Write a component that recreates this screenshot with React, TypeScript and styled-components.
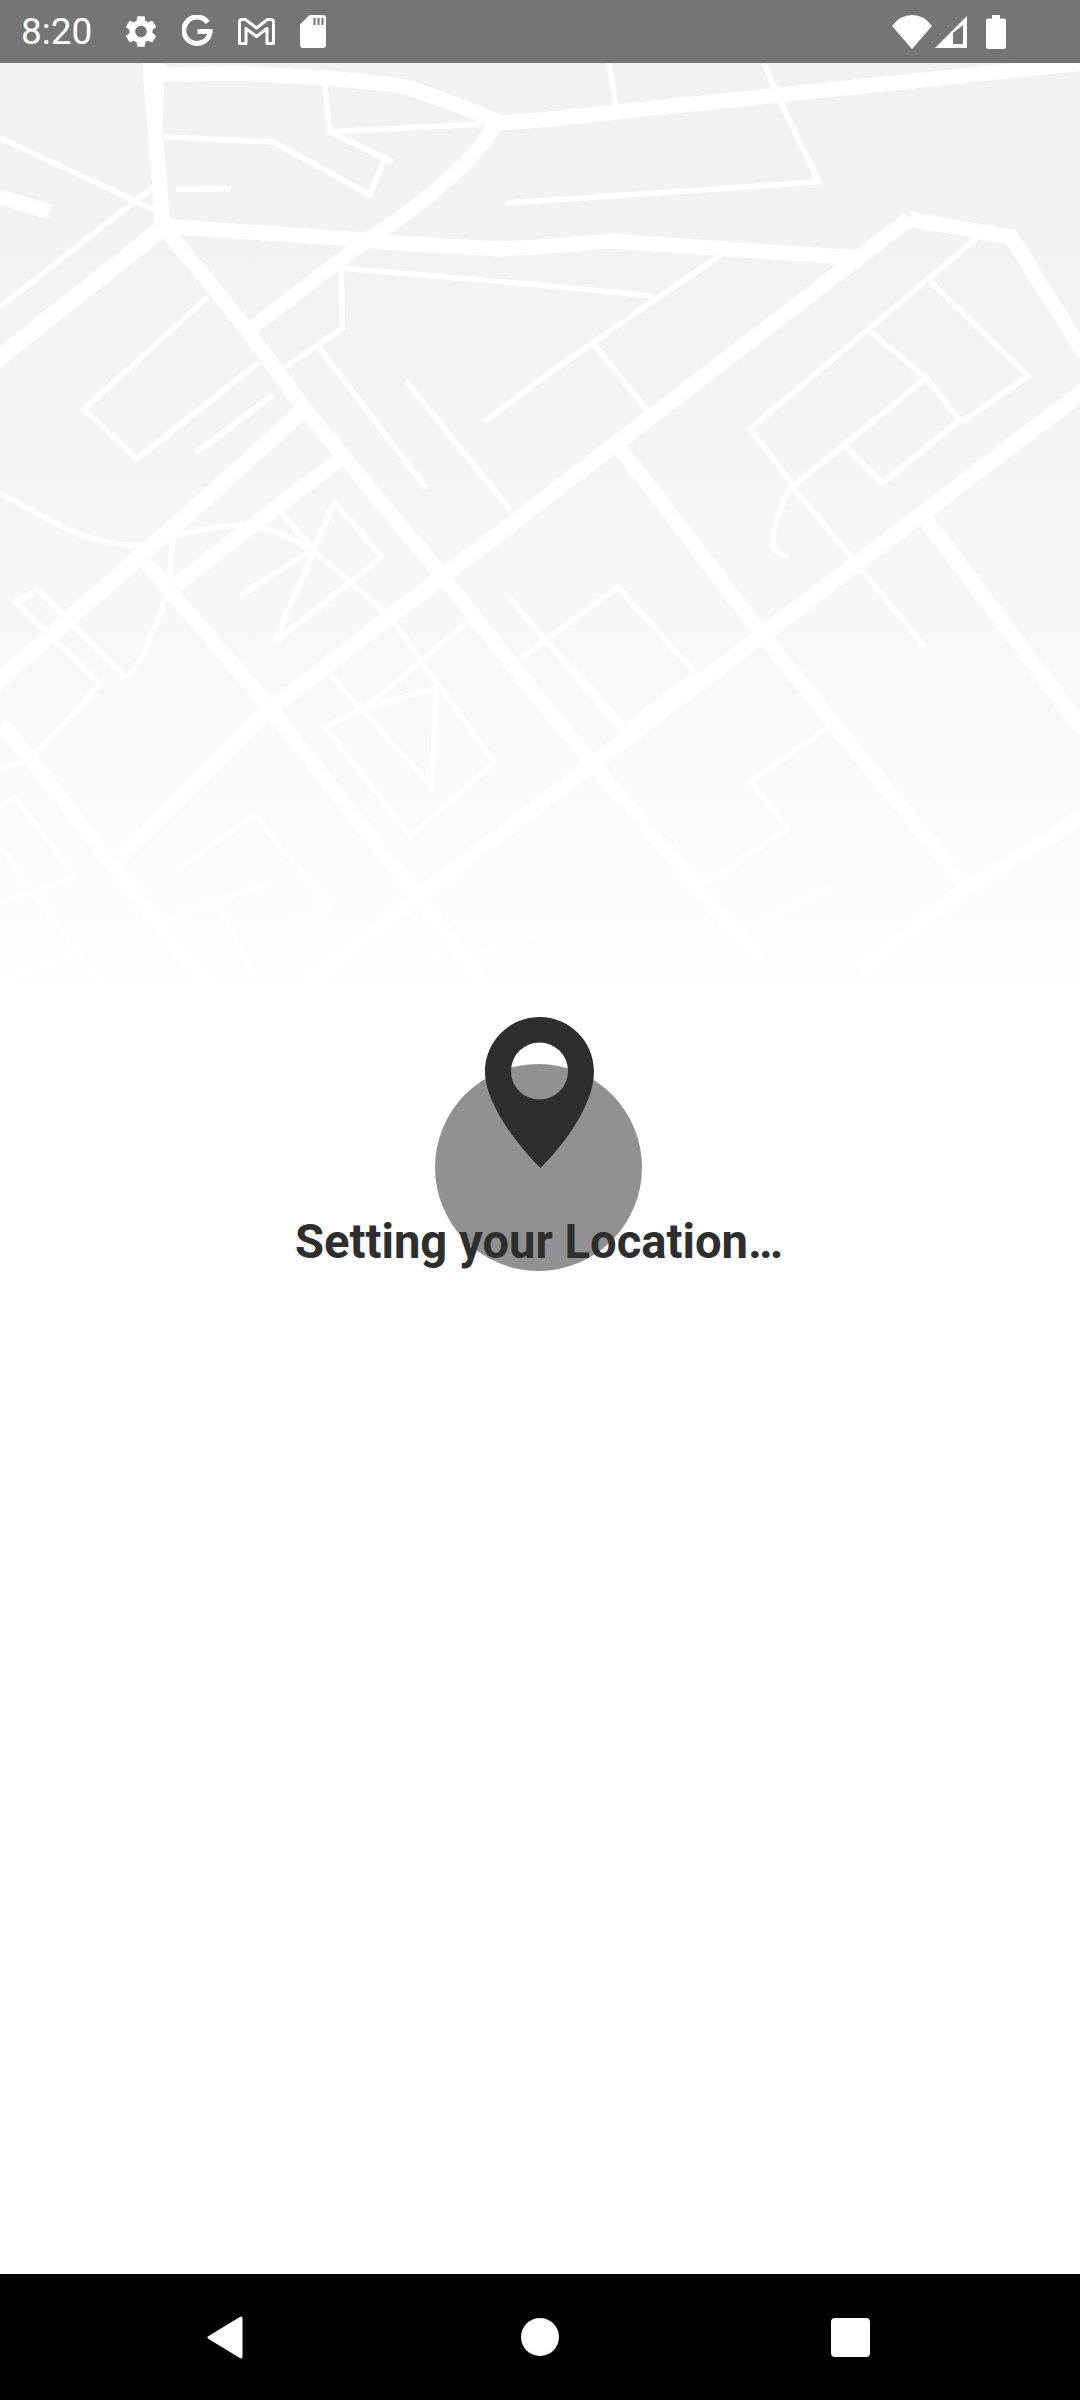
import React from "react";
import styled, { createGlobalStyle } from "styled-components";

const Global = createGlobalStyle`
  html, body { margin: 0; padding: 0; background: #fff; }
  #root { width: 1080px; height: 2400px; }
`;

const Screen = styled.div`
  width: 1080px;
  height: 2400px;
  display: flex;
  flex-direction: column;
  background: #fff;
  overflow: hidden;
  font-family: Roboto, "Liberation Sans", sans-serif;
`;

const StatusBar = styled.header`
  flex: none;
  height: 63px;
  background: #757575;
  color: #fff;
  display: flex;
  align-items: center;
  justify-content: space-between;
  padding: 0 74px 0 21px;
  box-sizing: border-box;
`;

const StatusGroup = styled.div<{ $gap: number }>`
  display: flex;
  align-items: center;
  gap: ${(p) => p.$gap}px;
`;

const Time = styled.span`
  font-size: 37px;
  line-height: 63px;
  font-weight: 400;
  margin-right: 8px;
`;

const StatusIcon = styled.svg`
  display: block;
  flex: none;
  fill: #fff;
`;

const BatteryIcon = styled(StatusIcon)`
  margin-left: 16px;
`;

const MapArea = styled.section`
  flex: none;
  height: 937px;
  background: linear-gradient(
    180deg,
    #f2f2f2 0%,
    #f3f3f3 30%,
    #f6f6f6 50%,
    #f9f9f9 70%,
    #fbfbfb 85%,
    #ffffff 100%
  );
`;

const MapDrawing = styled.svg`
  display: block;
  width: 1080px;
  height: 937px;
  fill: none;
  stroke: #fff;
`;

const Content = styled.main`
  flex: 1;
  display: flex;
  flex-direction: column;
  align-items: center;
  padding: 17px 2px 0 0;
`;

const Stage = styled.div`
  position: relative;
  display: flex;
  flex-direction: column;
  align-items: center;
`;

const Halo = styled.div`
  position: absolute;
  top: 47px;
  left: 50%;
  width: 207px;
  height: 207px;
  margin-left: -104px;
  border-radius: 50%;
  background: #919191;
`;

const Pin = styled.svg`
  position: relative;
  display: block;
  width: 109px;
  height: 151px;
  margin-left: 1px;
  fill: #2e2e2e;
`;

const Title = styled.h1`
  position: relative;
  margin: 48px 0 0;
  font-size: 47.2px;
  line-height: 52px;
  font-weight: 700;
  color: #2e2e2e;
  white-space: nowrap;
`;

const NavBar = styled.nav`
  flex: none;
  height: 126px;
  background: #000;
  display: grid;
  grid-template-columns: 1fr;
  align-items: center;
`;

const NavIcons = styled.div`
  display: flex;
  align-items: center;
  justify-content: space-between;
  padding: 0 210px 0 207px;
`;

const BackIcon = styled.svg`
  display: block;
  width: 37px;
  height: 43px;
  fill: #fff;
`;

const HomeIcon = styled.span`
  display: block;
  width: 38px;
  height: 38px;
  margin-left: 5px;
  border-radius: 50%;
  background: #fff;
`;

const RecentIcon = styled.span`
  display: block;
  width: 39px;
  height: 39px;
  border-radius: 4px;
  background: #fff;
`;

const majorRoads: [string, number][] = [
  ["M148 75 L241 73.3 L327 78 L396 85 Q412 88 424 93 L465 108 Q485 115 499 123 L540 120 L1085 63", 15],
  ["M497 122 L493 128 Q478 152 456 172 Q425 202 376 234 L356 248 L253 327", 14.5],
  ["M162 226 L365 240 L379 242 L499 249 L540 247 L612 241 L860 258", 15],
  ["M909 219 L1011 237 L1085 355", 15],
  ["M909 219 L540 502 L275 705 L265 713 L120 858", 15.5],
  ["M162 226 Q200 270 251 335 L303 407 L379 500 L444 578 L540 700 L592 763 L760 960", 15],
  ["M-5 361 L160 230", 17],
  ["M-5 684 L204 500 L301 412", 16],
  ["M339 460 L279 505 L176 585", 15],
  ["M146 563 L266 703 L275 715 L413 891 L458 950 L482 982", 15],
  ["M1085 390 L927 510 L598 760 L423 893 L310 980", 16],
  ["M619 448 L660 500 L760 632 L967 888", 15],
  ["M922 515 L1085 732", 15.5],
  ["M1085 815 L967 888 L860 970", 15],
  ["M0 723 L30 758 L138 898 L213 993", 15],
  ["M30 760 L157 920 L220 1000", 14],
  ["M0 197 L50 212", 15],
];

const thinRoads: string[] = [
  "M0 138 L155 210",
  "M0 307 L153 187",
  "M165 137 L274 142 L370 195 L384 160",
  "M325 85 L329.5 132 L392.5 162",
  "M329.5 132 L482 124",
  "M176 189 L231 188.7",
  "M506 203 L540 200.7 L819 182 L781 103 L764 63",
  "M609 63 L616 105",
  "M208 297 L84 409 L137 459 L259 362",
  "M273 395 L196 453",
  "M285 367 L342.6 328 L341 268 L540 285 L653.6 296",
  "M318.5 347 L426 488",
  "M406 381 L510 510",
  "M484 422 L540 380 L592 343 L721 255",
  "M593 343 L647 410",
  "M977 238 L750 429 L795 487",
  "M795 485 L926 378 L871 332",
  "M926 378 L960 420 L883 483 L846 447",
  "M931 282 L1028 376 L962 422",
  "M793 488 L812 510 L926 648",
  "M791 487 L784 500 Q764 545 780 553 Q786 557 789 555",
  "M0 493 C50 520 90 548 145 545",
  "M170 537 Q205 527 241 525 Q280 528 310 550 Q330 563 348 580 L386 613",
  "M172 540 L170 577",
  "M165 598 Q150 650 127 678",
  "M39 590 L127 678",
  "M39 590 L15.5 602 L100 685 L34 755",
  "M241 595 L312 550",
  "M334 502 L275 642 L382 557 L334 502",
  "M279 510 L312 548",
  "M394 623 L494 762 L411 837 L325 727 L365 708 L436 688 L432 787 L330 675",
  "M365 708 L467 622",
  "M510 598 L622 732",
  "M520 659 L618 587 L695 673 L625 727 L547 640",
  "M829 727 L750 782 L788 828 L702 885",
  "M826 888 L738 933",
  "M0 807 L15 798 L76 877 L0 903",
  "M0 847 L31 890 L79 953 L110 997",
  "M0 768 L22 762",
  "M181 867 L255 815 L330 907 L241 940",
  "M270 882 L165 920 L76 953 L0 980",
  "M219 905 L255 977",
  "M365 960 L441 957",
  "M468 953 L540 937",
];

export default function App() {
  return (
    <Screen>
      <Global />
      <StatusBar>
        <StatusGroup $gap={25}>
          <Time>8:20</Time>
          <StatusIcon width="32" height="33" viewBox="2 1.8 20 20.4">
            <path d="M19.14 12.94c.04-.3.06-.61.06-.94 0-.32-.02-.64-.07-.94l2.03-1.58a.49.49 0 0 0 .12-.61l-1.92-3.32a.49.49 0 0 0-.59-.22l-2.39.96c-.5-.38-1.03-.7-1.62-.94l-.36-2.54a.48.48 0 0 0-.48-.41h-3.84c-.24 0-.43.17-.47.41l-.36 2.54c-.59.24-1.13.57-1.62.94l-2.39-.96a.48.48 0 0 0-.59.22L2.74 8.87c-.12.21-.08.47.12.61l2.03 1.58c-.05.3-.09.63-.09.94s.02.64.07.94l-2.03 1.58a.49.49 0 0 0-.12.61l1.92 3.32c.12.22.37.29.59.22l2.39-.96c.5.38 1.03.7 1.62.94l.36 2.54c.05.24.24.41.48.41h3.84c.24 0 .44-.17.47-.41l.36-2.54c.59-.24 1.13-.56 1.62-.94l2.39.96c.22.08.47 0 .59-.22l1.92-3.32c.12-.22.07-.47-.12-.61l-2.01-1.58zM12 15.6c-1.98 0-3.6-1.62-3.6-3.6s1.62-3.6 3.6-3.6 3.6 1.62 3.6 3.6-1.62 3.6-3.6 3.6z" />
          </StatusIcon>
          <StatusIcon width="31" height="33" viewBox="0 0 32 33">
            <path
              d="M26.5 7.2 A13.6 13.6 0 1 0 29 17 L29 16.5 L16 16.5"
              fill="none"
              stroke="#fff"
              strokeWidth="5.2"
            />
          </StatusIcon>
          <StatusIcon width="37" height="27" viewBox="0 0 37 27">
            <path
              d="M1.5 25.5 V4 Q1.5 1.5 4 1.5 H7.5 L18.5 10 L29.5 1.5 H33 Q35.5 1.5 35.5 4 V25.5 H29 V10.5 L18.5 18.5 L8 10.5 V25.5 Z"
              fill="none"
              stroke="#fff"
              strokeWidth="3"
              strokeLinejoin="round"
            />
          </StatusIcon>
          <StatusIcon width="26" height="33" viewBox="0 0 26 33">
            <path d="M9.5 0 H23 a3 3 0 0 1 3 3 V30 a3 3 0 0 1 -3 3 H3 a3 3 0 0 1 -3 -3 V9.5 Z" />
            <path d="M13.5 3 h2 v7 h-2 z M17.5 3 h2 v7 h-2 z M21.5 3 h2 v7 h-2 z" fill="#757575" />
          </StatusIcon>
        </StatusGroup>
        <StatusGroup $gap={3}>
          <StatusIcon width="40" height="34" viewBox="0 0 40 34">
            <path d="M0 11 Q8 0 20 0 Q32 0 40 11 L20 34 Z" />
          </StatusIcon>
          <StatusIcon width="32" height="32" viewBox="0 0 32 32">
            <path fillRule="evenodd" d="M32 0 V32 H0 Z M18 17 V28 H28 V9 Z" />
          </StatusIcon>
          <BatteryIcon width="20" height="34" viewBox="0 0 20 34">
            <path d="M6 0 H14 V3.5 H18 a2 2 0 0 1 2 2 V32 a2 2 0 0 1 -2 2 H2 a2 2 0 0 1 -2 -2 V5.5 a2 2 0 0 1 2 -2 H6 Z" />
          </BatteryIcon>
        </StatusGroup>
      </StatusBar>

      <MapArea>
        <MapDrawing viewBox="0 63 1080 937">
          <polygon points="143,63 165,63 162.5,127 170,219 172,235 155,235 152,183 143,75" fill="#fff" stroke="none" />
          {majorRoads.map(([d, w], i) => (
            <path key={i} d={d} strokeWidth={w} />
          ))}
          {thinRoads.map((d, i) => (
            <path key={i} d={d} strokeWidth={5.5} />
          ))}
        </MapDrawing>
      </MapArea>

      <Content>
        <Stage>
          <Halo />
          <Pin viewBox="0 0 109 151">
            <path
              fillRule="evenodd"
              d="M54.5 0 C24.4 0 0 24.4 0 54.5 C0 90 40 136 55.5 151 C71 136 109 92 109 54.5 C109 24.4 84.6 0 54.5 0 Z M54.5 25.5 A28.5 28.5 0 1 1 54.5 82.5 A28.5 28.5 0 1 1 54.5 25.5 Z"
            />
          </Pin>
          <Title>Setting your Location…</Title>
        </Stage>
      </Content>

      <NavBar>
        <NavIcons>
          <BackIcon viewBox="0 0 37 43">
            <path d="M34 2 L2 21.5 L34 41 Z" stroke="#fff" strokeWidth="3" strokeLinejoin="round" />
          </BackIcon>
          <HomeIcon />
          <RecentIcon />
        </NavIcons>
      </NavBar>
    </Screen>
  );
}
